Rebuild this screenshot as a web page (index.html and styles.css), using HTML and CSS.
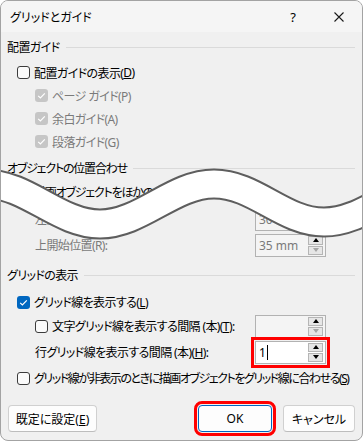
FILE: index.html
```html
<!DOCTYPE html>
<html lang="ja">
<head>
    <meta charset="UTF-8">
    <title>グリッドとガイド</title>
    <link rel="stylesheet" href="styles.css">
</head>
<body>
    <div class="dialog">
        <!-- title bar -->
        <div class="titlebar">
            <span class="title">グリッドとガイド</span>
            <span class="cap-btn help">?</span>
            <span class="cap-btn close">
                <svg width="10" height="10" viewBox="0 0 10 10"><path d="M0.5 0.5 L9.5 9.5 M9.5 0.5 L0.5 9.5" stroke="#1a1a1a" stroke-width="1.1" fill="none"/></svg>
            </span>
        </div>

        <div class="content">
            <!-- 配置ガイド -->
            <div class="group-head first"><span>配置ガイド</span><i class="rule"></i></div>
            <div class="row lv1"><span class="cb"></span>配置ガイドの表示(<u>D</u>)</div>
            <div class="row lv2 disabled"><span class="cb checked off"><svg viewBox="0 0 13 13"><path d="M3.2 6.8 L5.4 9 L9.8 4.4"/></svg></span>ページ ガイド(P)</div>
            <div class="row lv2 disabled"><span class="cb checked off"><svg viewBox="0 0 13 13"><path d="M3.2 6.8 L5.4 9 L9.8 4.4"/></svg></span>余白ガイド(A)</div>
            <div class="row lv2 disabled"><span class="cb checked off"><svg viewBox="0 0 13 13"><path d="M3.2 6.8 L5.4 9 L9.8 4.4"/></svg></span>段落ガイド(G)</div>

            <!-- オブジェクトの位置合わせ -->
            <div class="group-head tight"><span>オブジェクトの位置合わせ</span><i class="rule"></i></div>
            <div class="row lv1 tall tight"><span class="cb checked"><svg viewBox="0 0 13 13"><path d="M3.2 6.8 L5.4 9 L9.8 4.4"/></svg></span>描画オブジェクトをほかのオブジェクトに合わせる(<u>N</u>)</div>
            <div class="field disabled">
                <span class="label">左開始位置(O):</span>
                <span class="spin off"><span class="val">30 mm</span><span class="arrows"><span class="arrow"><i class="up"></i></span><span class="arrow"><i class="down"></i></span></span></span>
            </div>
            <div class="field disabled">
                <span class="label">上開始位置(R):</span>
                <span class="spin off"><span class="val">35 mm</span><span class="arrows"><span class="arrow"><i class="up"></i></span><span class="arrow"><i class="down"></i></span></span></span>
            </div>

            <!-- グリッドの表示 -->
            <div class="group-head grid-head"><span>グリッドの表示</span><i class="rule"></i></div>
            <div class="row lv1 show-grid"><span class="cb checked"><svg viewBox="0 0 13 13"><path d="M3.2 6.8 L5.4 9 L9.8 4.4"/></svg></span>グリッド線を表示する(<u>L</u>)</div>
            <div class="field">
                <span class="label"><span class="cb"></span>文字グリッド線を表示する間隔 (本)(<u>T</u>):</span>
                <span class="spin off"><span class="val"></span><span class="arrows"><span class="arrow"><i class="up"></i></span><span class="arrow"><i class="down"></i></span></span></span>
            </div>
            <div class="field">
                <span class="label">行グリッド線を表示する間隔 (本)(<u>H</u>):</span>
                <span class="spin marked"><span class="val">1<i class="caret"></i></span><span class="arrows"><span class="arrow"><i class="up"></i></span><span class="arrow"><i class="down"></i></span></span></span>
            </div>
            <div class="row lv1 snap"><span class="cb"></span>グリッド線が非表示のときに描画オブジェクトをグリッド線に合わせる(<u>S</u>)</div>
        </div>

        <div class="buttons">
            <button class="btn">既定に設定(<u>E</u>)</button>
            <button class="btn ok marked">OK</button>
            <button class="btn cancel">キャンセル</button>
        </div>

        <!-- cut mark drawn over the dialog -->
        <svg class="wave" width="363" height="441" viewBox="0 0 363 441">
            <path d="M-14 184 C27 184 59 224 100 224 S173 184 214 184 S283 222 324 222 S395 184 436 184" stroke="#5e5e5e" stroke-width="31" fill="none"/>
            <path d="M-14 184 C27 184 59 224 100 224 S173 184 214 184 S283 222 324 222 S395 184 436 184" stroke="#ffffff" stroke-width="27" fill="none"/>
        </svg>
    </div>
</body>
</html>
```

FILE: styles.css
```css
body {
    margin: 0;
    background: #ffffff;
    font-family: "Noto Sans", "Noto Sans CJK JP", sans-serif;
    font-size: 12px;
    font-feature-settings: "palt";
    color: #000;
}

.dialog {
    position: relative;
    width: 363px;
    height: 441px;
    box-sizing: border-box;
    border: 1px solid #a3a3a3;
    border-radius: 8px;
    background: #f0f0f0;
    overflow: hidden;
}

.titlebar {
    height: 31px;
    display: flex;
    align-items: center;
    background: #f5f5f5;
}

.title {
    flex: 1;
    padding-left: 9px;
}

.cap-btn {
    width: 46px;
    height: 31px;
    display: flex;
    align-items: center;
    justify-content: center;
}

.help {
    font-size: 13px;
}

.content {
    padding: 0 7px 0 6px;
    letter-spacing: -0.6px;
    white-space: nowrap;
}

.tight {
    letter-spacing: -1.2px;
}

.group-head {
    height: 20px;
    margin-top: 5px;
    display: flex;
    align-items: center;
}

.group-head .rule {
    flex: 1;
    height: 1px;
    margin-left: 6px;
    background: #dadada;
}

.grid-head {
    margin-top: 7px;
}

.row {
    height: 23px;
    display: flex;
    align-items: center;
}

.row.lv1 {
    padding-left: 10px;
}

.row.lv2 {
    padding-left: 28px;
}

.group-head.first + .row {
    margin-top: 4px;
}

.row.tall {
    height: 28px;
}

.row.show-grid {
    margin-top: 6px;
    height: 22px;
}

.row.snap {
    height: 26px;
    letter-spacing: -1.45px;
}

.disabled {
    color: #7a7a7a;
}

.cb {
    flex: none;
    width: 13px;
    height: 13px;
    box-sizing: border-box;
    margin-right: 4px;
    border: 1px solid #3c3c3c;
    border-radius: 3px;
    background: #fbfbfb;
    display: inline-flex;
}

.cb.checked {
    border: none;
    background: #0067c0;
}

.cb.checked.off {
    background: #c6c6c6;
}

.cb svg {
    width: 13px;
    height: 13px;
}

.cb svg path {
    fill: none;
    stroke: #fff;
    stroke-width: 1.2;
}

.field {
    height: 26px;
    display: flex;
    align-items: center;
    padding-left: 28px;
    padding-right: 29px;
}

.field .label {
    flex: 1;
    display: flex;
    align-items: center;
}

.spin {
    width: 71px;
    height: 23px;
    box-sizing: border-box;
    border: 1px solid #b2b2b2;
    background: #fff;
    padding: 1px 2px 1px 1px;
    display: flex;
    align-items: center;
    letter-spacing: 0;
}

.spin.off {
    background: #f4f4f4;
    color: #7a7a7a;
}

.spin .val {
    flex: 1;
    padding-left: 2px;
    display: flex;
    align-items: center;
}

.caret {
    display: inline-block;
    width: 1px;
    height: 15px;
    margin-left: 1px;
    background: #000;
}

.spin .arrows {
    width: 15px;
    height: 19px;
    display: flex;
    flex-direction: column;
    gap: 1px;
}

.arrow {
    flex: 1;
    box-sizing: border-box;
    border: 1px solid #b5b5b5;
    background: #e6e6e6;
    display: flex;
    align-items: center;
    justify-content: center;
}

.arrow .up {
    width: 0;
    height: 0;
    border-left: 3.5px solid transparent;
    border-right: 3.5px solid transparent;
    border-bottom: 4px solid #000;
}

.arrow .down {
    width: 0;
    height: 0;
    border-left: 3.5px solid transparent;
    border-right: 3.5px solid transparent;
    border-top: 4px solid #000;
}

.spin.off .arrow .down {
    border-top-color: #a5a5a5;
}

.marked {
    outline: 3px solid #ff0000;
    outline-offset: 1px;
}

.buttons {
    display: flex;
    margin-top: 14px;
    padding: 0 7px 0 7px;
}

.btn {
    height: 27px;
    box-sizing: border-box;
    border: 1px solid #d0d0d0;
    border-bottom-color: #bdbdbd;
    border-radius: 4px;
    background: #fdfdfd;
    font-family: inherit;
    font-size: 12px;
    font-feature-settings: "palt";
    color: #000;
    padding: 0;
    width: 89px;
}

.btn.ok {
    width: 74px;
    margin-left: auto;
    border: 1px solid #0067c0;
}

.btn.cancel {
    width: 72px;
    margin-left: 11px;
}

.wave {
    position: absolute;
    left: -1px;
    top: -1px;
    pointer-events: none;
}
```
